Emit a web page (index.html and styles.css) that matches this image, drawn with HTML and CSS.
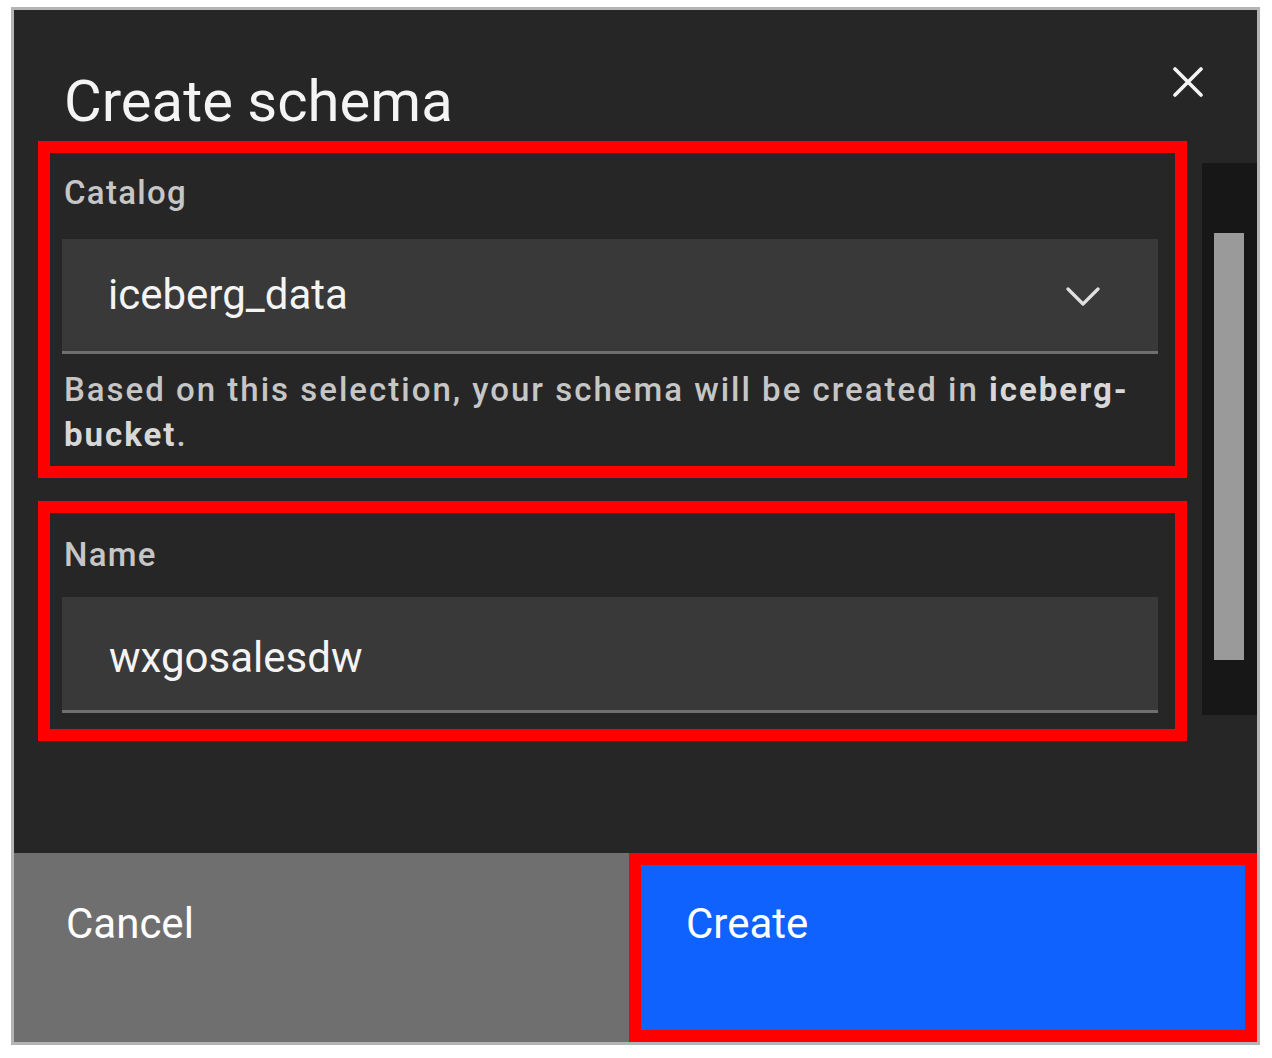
FILE: index.html
```html
<!DOCTYPE html>
<html lang="en">
<head>
<meta charset="utf-8">
<title>Create schema</title>
<link rel="stylesheet" href="styles.css">
</head>
<body>
<div class="dialog">
  <div class="header">
    <h1 class="title">Create schema</h1>
    <button class="close" aria-label="Close">
      <svg width="30" height="30" viewBox="0 0 30 30"><path d="M2 2 L28 28 M28 2 L2 28" stroke="#f4f4f4" stroke-width="3.6" stroke-linecap="round" fill="none"/></svg>
    </button>
  </div>
  <div class="body">
    <div class="form">
      <div class="mark mark-catalog">
        <div class="label">Catalog</div>
        <div class="select">
          <span class="value">iceberg_data</span>
          <svg class="chev" width="34" height="21" viewBox="0 0 34 21"><polyline points="2,3 17,18 32,3" stroke="#e0e0e0" stroke-width="3.2" fill="none" stroke-linecap="round" stroke-linejoin="round"/></svg>
        </div>
        <p class="helper"><span class="helper-line">Based on this selection, your schema will be created in <strong>iceberg-</strong></span><span class="helper-line"><strong>bucket</strong>.</span></p>
      </div>
      <div class="mark mark-name">
        <div class="label">Name</div>
        <div class="input"><span class="value">wxgosalesdw</span></div>
      </div>
    </div>
    <div class="track"><div class="thumb"></div></div>
  </div>
  <div class="footer">
    <button class="btn btn-cancel">Cancel</button>
    <button class="btn btn-create">Create</button>
  </div>
</div>
</body>
</html>
```
FILE: styles.css
```css
html, body {
  margin: 0;
  padding: 0;
  background: #ffffff;
}
body {
  padding: 7px 0 0 11px;
  font-family: Roboto, "Liberation Sans", sans-serif;
}
.dialog {
  width: 1243px;
  height: 1032px;
  border: 3px solid #b4b4b4;
  background: #262626;
  display: flex;
  flex-direction: column;
}
.header {
  height: 131px;
  box-sizing: border-box;
  padding: 0 54px 0 50px;
  display: flex;
  justify-content: space-between;
  align-items: flex-start;
  flex: none;
}
.title {
  margin: 57px 0 0 0;
  font-weight: 400;
  font-size: 58px;
  line-height: 68px;
  color: #f4f4f4;
  height: 74px;
}
.close {
  margin-top: 57px;
  padding: 0;
  border: 0;
  background: none;
  width: 30px;
  height: 30px;
  display: block;
}
.close svg { display: block; }
.body {
  display: flex;
  flex: none;
}
.form {
  width: 1188px;
  box-sizing: border-box;
  padding: 0 15px 0 24px;
  display: flex;
  flex-direction: column;
  gap: 23px;
}
.mark {
  border: 12px solid #ff0000;
  padding: 20px 17px 9px 12px;
}
.mark-name {
  padding-top: 22px;
  padding-bottom: 16px;
}
.label {
  font-size: 33px;
  line-height: 40px;
  font-weight: 500;
  letter-spacing: 1.3px;
  color: #c6c6c6;
  margin: 0 0 26px 2px;
}
.mark-name .label { margin-bottom: 22px; }
.select, .input {
  background: #393939;
  border-bottom: 3px solid #6f6f6f;
  height: 112px;
  box-sizing: content-box;
  display: flex;
  align-items: center;
  padding: 0 58px 0 46px;
  justify-content: space-between;
}
.input {
  height: 113px;
  padding-left: 47px;
}
.input .value { padding-top: 8px; }
.value {
  font-size: 42px;
  line-height: 50px;
  color: #f4f4f4;
}
.chev { display: block; margin-top: 2px; }
.helper {
  margin: 13px 0 0 2px;
  font-size: 33px;
  line-height: 45px;
  font-weight: 500;
  letter-spacing: 2px;
  color: #c6c6c6;
}
.helper-line {
  display: block;
  white-space: nowrap;
}
.helper strong {
  font-weight: 700;
  color: #d8d8d8;
}
.track {
  width: 55px;
  height: 552px;
  margin-top: 22px;
  background: #171717;
  box-sizing: border-box;
  padding: 70px 13px 0 12px;
}
.thumb {
  height: 427px;
  background: #9a9a9a;
}
.footer {
  margin-top: auto;
  height: 189px;
  display: grid;
  grid-template-columns: 615px 1fr;
  flex: none;
}
.btn {
  border: 0;
  margin: 0;
  font-family: Roboto, "Liberation Sans", sans-serif;
  font-size: 42px;
  line-height: 50px;
  color: #ffffff;
  text-align: left;
  display: flex;
  align-items: flex-start;
  padding: 46px 0 0 52px;
}
.btn-cancel {
  background: #6f6f6f;
}
.btn-create {
  background: #0f62fe;
  padding-left: 57px;
  box-shadow: inset 0 0 0 12px #ff0000;
  padding-top: 46px;
}
```
